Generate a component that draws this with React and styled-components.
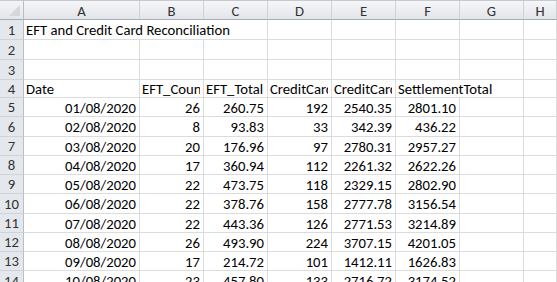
import React from "react";
import styled, { createGlobalStyle } from "styled-components";

const Global = createGlobalStyle`
  html, body { margin: 0; padding: 0; background: #fff; overflow: hidden; }
  body { font-family: Carlito, Lato, "Liberation Sans", sans-serif; }
`;

const Sheet = styled.div`
  display: grid;
  grid-template-columns: 24px 116px repeat(6, 64px) 1fr;
  grid-template-rows: 20px 20px 20px 20px 18px 19px 20px 19px 19px 19px 20px 19px 19px 19px 20px;
  width: 557px;
  height: 282px;
  overflow: hidden;
  font-size: 14.7px;
  color: #000;
`;

const Corner = styled.div`
  position: relative;
  box-sizing: border-box;
  background: linear-gradient(#f3f4f6, #e3e6ea);
  border-right: 1px solid #b9bec6;
  border-bottom: 1px solid #a7acb3;
  border-top: 1px solid #c6cad0;
  &::after {
    content: "";
    position: absolute;
    right: 3px;
    bottom: 3px;
    width: 0;
    height: 0;
    border-left: 11px solid transparent;
    border-bottom: 11px solid #d3d6da;
  }
`;

const ColHead = styled.div`
  box-sizing: border-box;
  background: linear-gradient(#f5f6f8, #e2e5e9);
  border-right: 1px solid #cdd1d6;
  border-bottom: 1px solid #a7acb3;
  border-top: 1px solid #c6cad0;
  display: flex;
  align-items: center;
  justify-content: center;
  color: #333;
  padding-top: 1px;
`;

const RowHead = styled.div`
  box-sizing: border-box;
  background: #e4e7eb;
  border-right: 1px solid #b9bec6;
  border-bottom: 1px solid #cfd3d8;
  display: flex;
  align-items: center;
  justify-content: center;
  color: #333;
`;

const Cell = styled.div`
  box-sizing: border-box;
  border-right: 1px solid #dadcdd;
  border-bottom: 1px solid #dadcdd;
  display: flex;
  align-items: center;
  justify-content: ${(p) => (p.$right ? "flex-end" : "flex-start")};
  padding: 1px 3px 0 2px;
  white-space: nowrap;
  overflow: ${(p) => (p.$spill ? "visible" : "hidden")};
  grid-column: ${(p) => (p.$span ? `span ${p.$span}` : "auto")};
  min-width: 0;
`;

const Clip = styled.span`
  display: block;
  overflow: hidden;
  white-space: nowrap;
  max-width: 100%;
`;

const cols = ["A", "B", "C", "D", "E", "F", "G", "H"];

const data = [
  ["01/08/2020", 26, "260.75", 192, "2540.35", "2801.10"],
  ["02/08/2020", 8, "93.83", 33, "342.39", "436.22"],
  ["03/08/2020", 20, "176.96", 97, "2780.31", "2957.27"],
  ["04/08/2020", 17, "360.94", 112, "2261.32", "2622.26"],
  ["05/08/2020", 22, "473.75", 118, "2329.15", "2802.90"],
  ["06/08/2020", 22, "378.76", 158, "2777.78", "3156.54"],
  ["07/08/2020", 22, "443.36", 126, "2771.53", "3214.89"],
  ["08/08/2020", 26, "493.90", 224, "3707.15", "4201.05"],
  ["09/08/2020", 17, "214.72", 101, "1412.11", "1626.83"],
  ["10/08/2020", 23, "457.80", 133, "2716.72", "3174.52"],
];

function EmptyCells({ n }) {
  return Array.from({ length: n }, (_, i) => <Cell key={i} />);
}

export default function App() {
  return (
    <>
      <Global />
      <Sheet>
        <Corner />
        {cols.map((c) => (
          <ColHead key={c}>{c}</ColHead>
        ))}

        <RowHead>1</RowHead>
        <Cell $span={3} $spill>EFT and Credit Card Reconciliation</Cell>
        <EmptyCells n={5} />

        <RowHead>2</RowHead>
        <EmptyCells n={8} />

        <RowHead>3</RowHead>
        <EmptyCells n={8} />

        <RowHead>4</RowHead>
        <Cell>Date</Cell>
        <Cell><Clip>EFT_Count</Clip></Cell>
        <Cell><Clip>EFT_Total</Clip></Cell>
        <Cell><Clip>CreditCardCount</Clip></Cell>
        <Cell><Clip>CreditCardTotal</Clip></Cell>
        <Cell $span={2}>SettlementTotal</Cell>
        <Cell />

        {data.map((r, i) => (
          <React.Fragment key={i}>
            <RowHead>{i + 5}</RowHead>
            {r.map((v, j) => (
              <Cell key={j} $right>
                {v}
              </Cell>
            ))}
            <EmptyCells n={2} />
          </React.Fragment>
        ))}
      </Sheet>
    </>
  );
}
